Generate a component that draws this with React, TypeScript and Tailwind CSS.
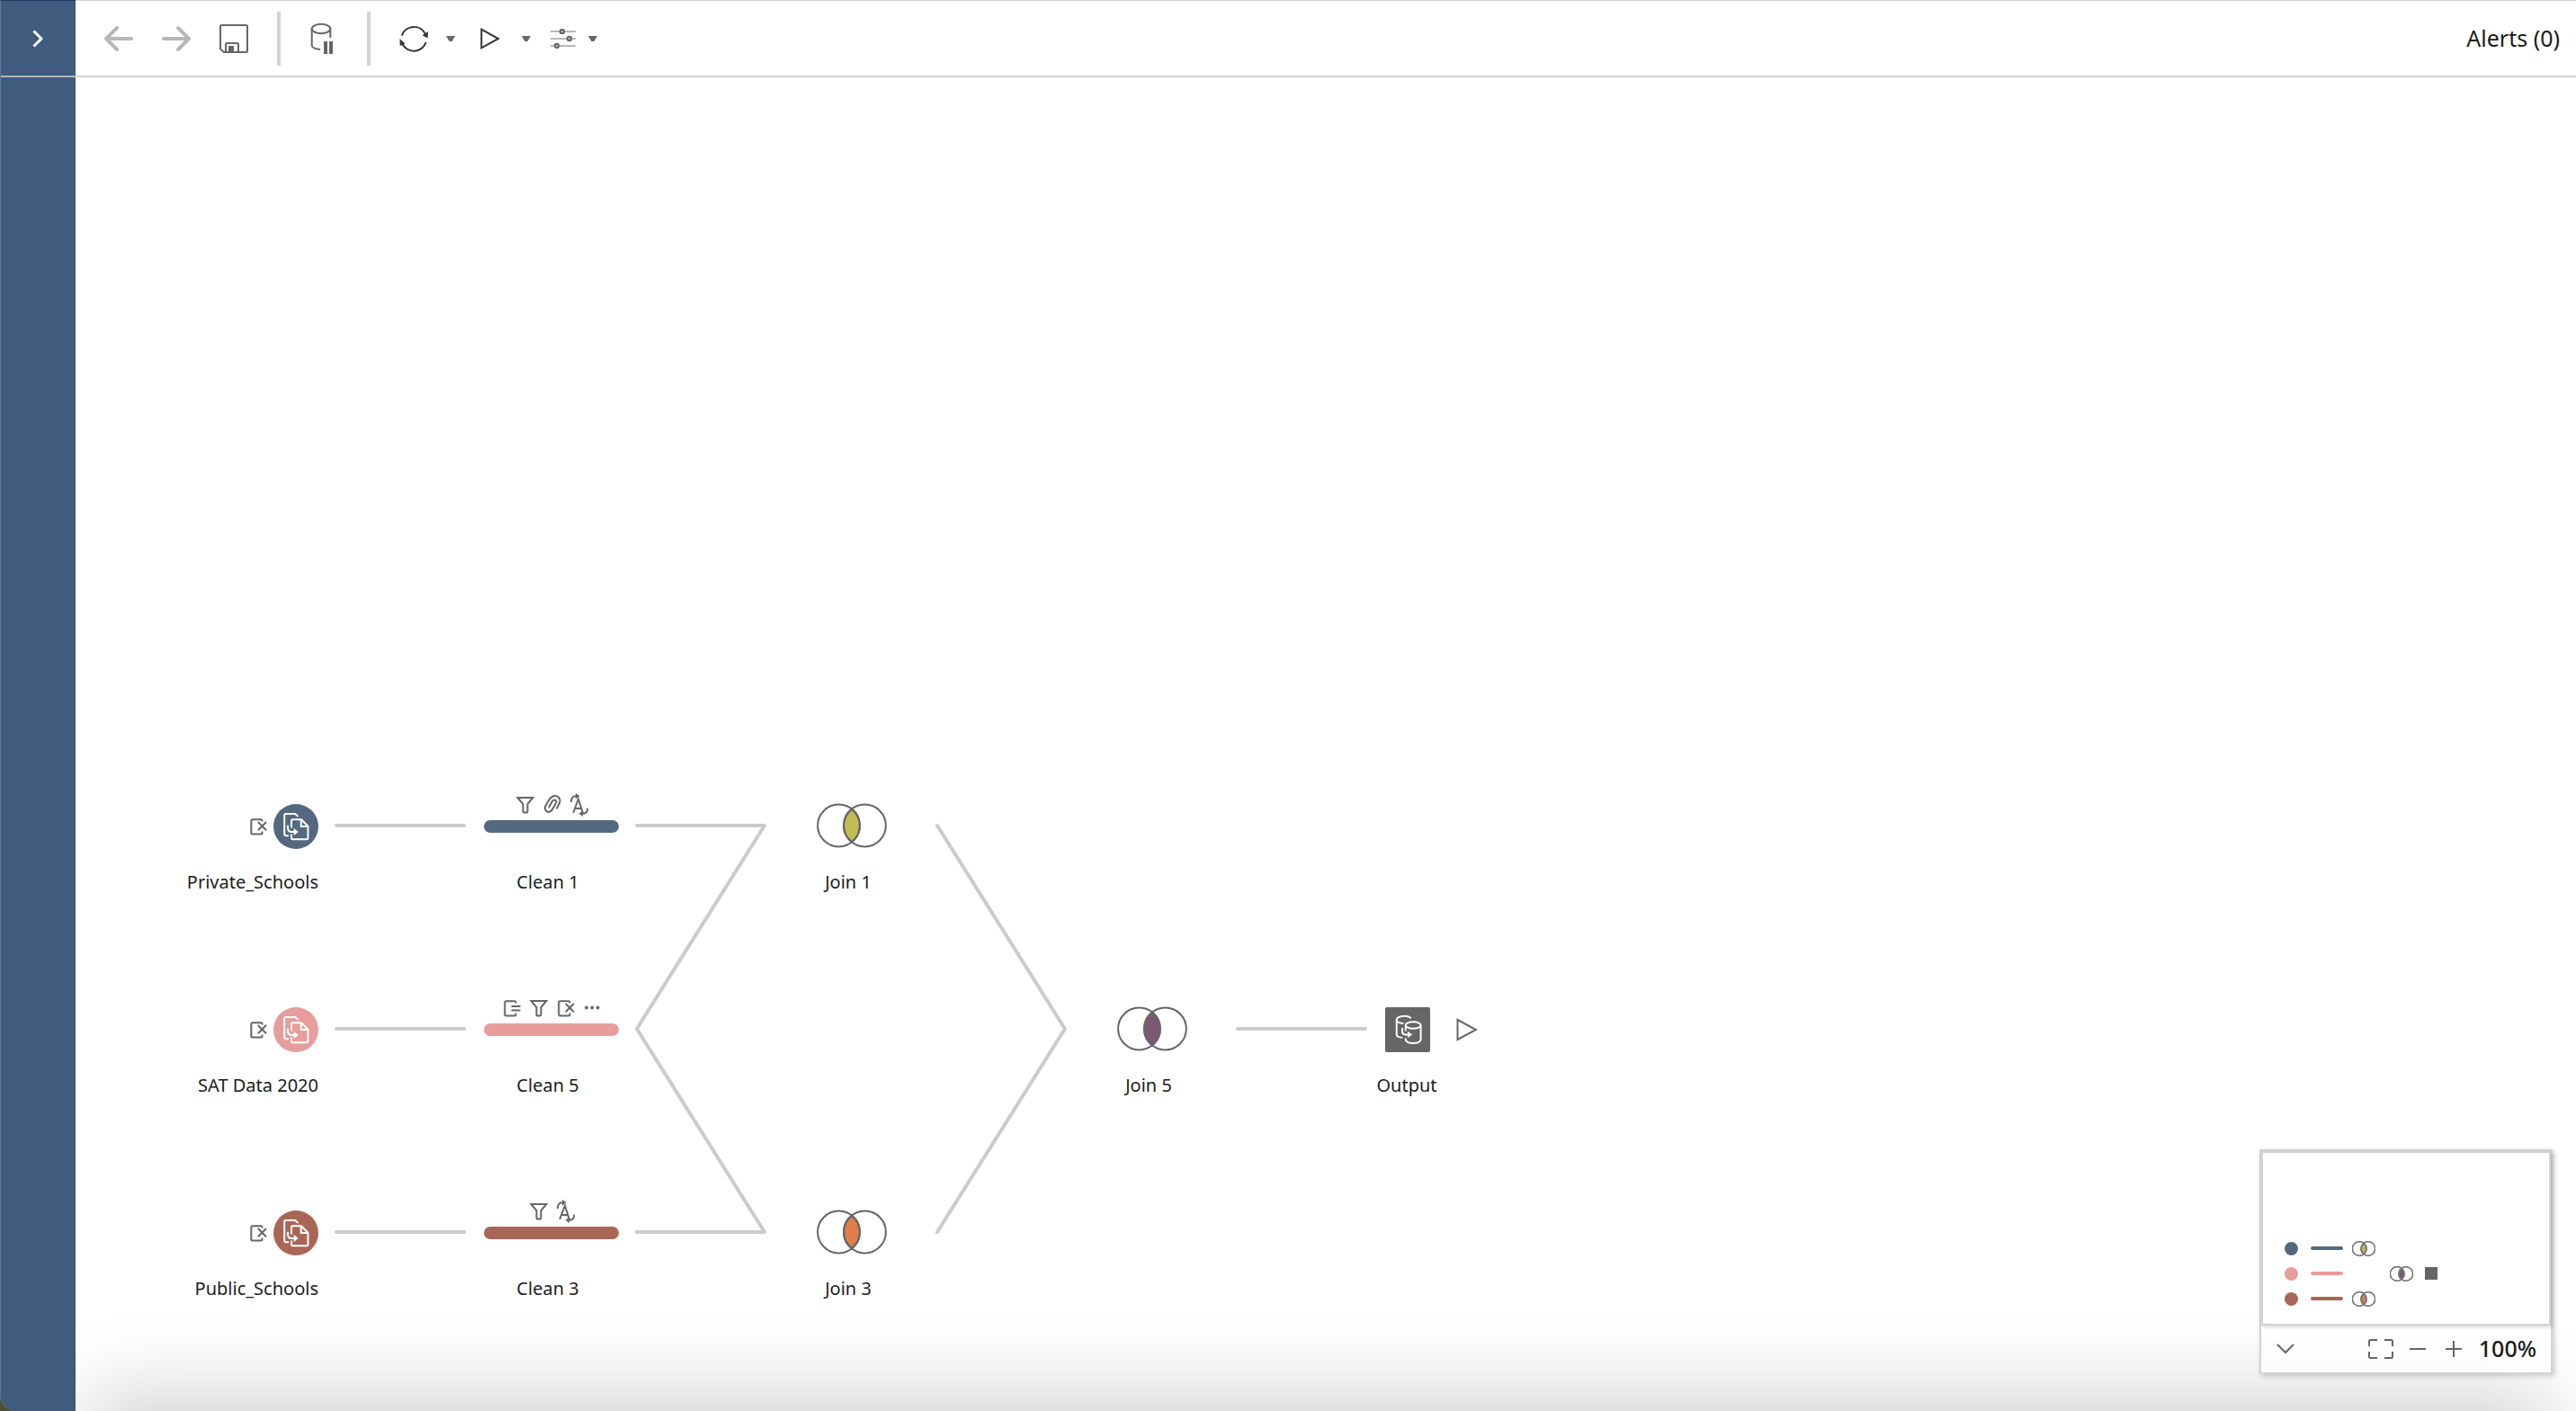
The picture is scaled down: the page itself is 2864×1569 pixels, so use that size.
import type { ReactNode } from "react";

type Badge = "filter" | "clip" | "rename" | "remove" | "list" | "more";

const ICON = "block fill-none stroke-[#666666] stroke-2";

function BadgeIcon({ kind }: { kind: Badge }) {
  return (
    <svg viewBox="0 0 20 26" className={`${ICON} h-[26px] w-5`} aria-hidden="true">
      {kind === "filter" && <path d="M1.5 5H18.5L12.5 12V20.5q0 1-1 1h-3q-1 0-1-1V12Z" />}
      {kind === "clip" && (
        <path d="M14.8 17.5L18 11C20 6 16 2 11.5 3.2C8.5 4 7 6 5.5 9L2.5 14C.5 18 4 22 7.5 20.5C9 20 10 18.5 11 16.5L14 11C15.5 8 12 6 10 9L6 16" />
      )}
      {kind === "rename" && (
        <>
          <path d="M3.3 22L9 6.5L14 22M5 17H12.5" />
          <path d="M1 10C1 5 3 3.3 6 3.3M19.3 16.5C19.3 21 17 22.7 14 22.7" />
          <path d="M6 0L10.5 3.2L6 6.4ZM14 19.6L9.5 22.8L14 26Z" className="fill-[#666666] stroke-none" />
        </>
      )}
      {(kind === "remove" || kind === "list") && (
        <path d="M14.5 7.5V7q0-1.8-1.5-1.8H4Q2.3 5.2 2.3 7V20q0 1.5 1.5 1.5H13q1.5 0 1.5-1.5V18.5" />
      )}
      {kind === "remove" && <path d="M9.8 8L19 17.3M19 8L9.8 17.3" />}
      {kind === "list" && <path d="M9.5 11H19.5M9.5 15.5H19.5" />}
      {kind === "more" && (
        <g className="fill-[#666666] stroke-none">
          <circle cx="3" cy="12.5" r="1.9" />
          <circle cx="9.3" cy="12.5" r="1.9" />
          <circle cx="15.6" cy="12.5" r="1.9" />
        </g>
      )}
    </svg>
  );
}

function FilesIcon() {
  return (
    <svg viewBox="0 0 30 32" className="block h-8 w-[30px] fill-none stroke-white stroke-2" aria-hidden="true">
      <path d="M16.5 5L13.3 2H2.7Q1.2 2 1.2 3.5V24.8q0 1.4 1.5 1.4H6" />
      <path d="M9 17.5V9.8q0-1.5 1.5-1.5H20L27.4 15.7V28.8q0 1.5-1.5 1.5H10.5Q9 30.3 9 28.8V24.5M19.7 8.3V15.9H27.4" />
      <path d="M5 14.8V17.5Q5 22 9.5 22H13" />
      <path d="M11.6 18L16.8 22L11.6 26Z" className="fill-white stroke-none" />
    </svg>
  );
}

function DatabaseOutIcon() {
  return (
    <svg viewBox="0 0 30 32" className="block h-8 w-[30px] fill-none stroke-white stroke-2" aria-hidden="true">
      <path d="M17.8 3.2C13-1 1.8 1 1.8 5.2V21.5Q2 24.5 8.3 24.8M1.8 5.2Q2 8.6 9.5 9" />
      <ellipse cx="20.2" cy="11" rx="8.4" ry="3.8" />
      <path d="M11.8 11V17.5M11.8 25.5V27Q12.5 31 20.2 31T28.6 27V11" />
      <path d="M8 14V18Q8 21.4 11.5 21.4H15.5" />
      <path d="M14 17.7L19.2 21.4L14 25.1Z" className="fill-white stroke-none" />
    </svg>
  );
}

function Venn({ fill, small }: { fill: string; small?: boolean }) {
  return (
    <svg
      viewBox="0 0 78 50"
      className={small ? "block h-[17px] w-[26px] fill-none stroke-[#777777] stroke-5" : "block h-[50px] w-[78px] fill-none stroke-[#666666] stroke-2"}
      aria-hidden="true"
    >
      <path d="M39 6.6A23.4 23.4 0 0 1 39 43.4A23.4 23.4 0 0 1 39 6.6Z" className={fill} />
      <circle cx="24.5" cy="25" r="23.4" />
      <circle cx="53.5" cy="25" r="23.4" />
    </svg>
  );
}

function Caret({ label }: { label: string }) {
  return (
    <button type="button" aria-label={label} className="block">
      <svg viewBox="0 0 10 6" className="block h-1.5 w-2.5 fill-[#666666]">
        <path d="M0 0H10L6.5 6H3.5Z" />
      </svg>
    </button>
  );
}

function Tool({ label, children }: { label: string; children: ReactNode }) {
  return (
    <button type="button" aria-label={label} className="block">
      {children}
    </button>
  );
}

function Toolbar() {
  return (
    <header className="flex h-[86px] shrink-0 items-center justify-between border-t border-b-2 border-t-[#d5d5d5] border-b-[#d3d3d3] bg-white pr-[18px] pl-8">
      <div className="flex items-center">
        <div className="flex items-center gap-8">
          <Tool label="Undo">
            <svg viewBox="0 0 32 32" className="block size-8 fill-none stroke-[#b8b8b8] stroke-4" strokeLinecap="round" strokeLinejoin="round">
              <path d="M14 4L2 16L14 28M2 16H30" />
            </svg>
          </Tool>
          <Tool label="Redo">
            <svg viewBox="0 0 32 32" className="block size-8 fill-none stroke-[#b8b8b8] stroke-4" strokeLinecap="round" strokeLinejoin="round">
              <path d="M18 4L30 16L18 28M30 16H2" />
            </svg>
          </Tool>
          <Tool label="Save">
            <svg viewBox="0 0 32 32" className="block size-8 fill-none stroke-[#666666] stroke-2">
              <path d="M2.5 1H29.5Q31 1 31 2.5V29.5Q31 31 29.5 31H5L1 27.5V2.5Q1 1 2.5 1Z" />
              <path d="M7 31V22.5Q7 21 8.5 21H19.5Q21 21 21 22.5V31" />
              <path d="M10 24H16V31H10Z" className="fill-[#666666] stroke-none" />
            </svg>
          </Tool>
          <div className="h-15 w-1 bg-[#d3d3d3]" />
          <Tool label="Pause data updates">
            <svg viewBox="0 0 32 36" className="block h-9 w-8 fill-none stroke-[#666666] stroke-2">
              <ellipse cx="13" cy="7" rx="10.3" ry="5.2" />
              <path d="M2.7 7V25.5Q3 29 12 30M23.3 7V17" />
              <path d="M16 21H20V35H16ZM22 21H26V35H22Z" className="fill-[#666666] stroke-none" />
            </svg>
          </Tool>
          <div className="h-15 w-1 bg-[#d3d3d3]" />
          <Tool label="Refresh">
            <svg viewBox="0 0 32 32" className="block size-8 fill-none stroke-[#333333] stroke-2">
              <path d="M2.6 12.6A14.2 14.2 0 0 1 29 11.2M29.6 20A14.2 14.2 0 0 1 3 21" />
              <path d="M25.5 12.2L32 8L31.5 15.5ZM.5 16L6.5 21.8L.7 24Z" className="fill-[#333333] stroke-none" />
            </svg>
          </Tool>
        </div>
        <div className="ml-5 flex items-center">
          <Caret label="Refresh options" />
        </div>
        <div className="ml-7 flex items-center gap-6">
          <Tool label="Run flow">
            <svg viewBox="0 0 22 24" className="block h-6 w-[22px] fill-none stroke-[#333333] stroke-2">
              <path d="M1.3 1.7L20 12L1.3 22.3Z" />
            </svg>
          </Tool>
          <Caret label="Run options" />
        </div>
        <div className="ml-[22px] flex items-center gap-3.5">
          <Tool label="Flow parameters">
            <svg viewBox="0 0 28 22" className="block h-[22px] w-7 fill-none stroke-[#b8b8b8] stroke-2">
              <path d="M0 3H28M0 11H28M0 19H28" />
              <g className="fill-[#b8b8b8] stroke-[#666666]">
                <circle cx="13" cy="3" r="2.2" />
                <circle cx="21" cy="11" r="2.2" />
                <circle cx="7" cy="19" r="2.2" />
              </g>
            </svg>
          </Tool>
          <Caret label="Parameter options" />
        </div>
      </div>
      <button type="button" className="text-[25px]">
        Alerts (0)
      </button>
    </header>
  );
}

const LABEL = "block text-xl leading-7 whitespace-nowrap";

function Source({ name, color, place }: { name: string; color: string; place: string }) {
  return (
    <div className={`absolute w-60 ${place}`}>
      <div className="flex items-center justify-end gap-[7px]">
        <BadgeIcon kind="remove" />
        <button type="button" aria-label={name} className={`flex size-[50px] items-center justify-center rounded-full pl-0.5 ${color}`}>
          <FilesIcon />
        </button>
      </div>
      <span className={`${LABEL} mt-[23px] text-right`}>{name}</span>
    </div>
  );
}

function Clean({ name, color, badges, place }: { name: string; color: string; badges: Badge[]; place: string }) {
  return (
    <div className={`absolute w-[150px] ${place}`}>
      <div className="flex justify-center gap-2.5 pl-0.5">
        {badges.map((b) => (
          <BadgeIcon key={b} kind={b} />
        ))}
      </div>
      <button type="button" aria-label={name} className={`mt-1 block h-3.5 w-full rounded-full ${color}`} />
      <span className={`${LABEL} mt-[41px] pr-2 text-center`}>{name}</span>
    </div>
  );
}

function Join({ name, fill, place }: { name: string; fill: string; place: string }) {
  return (
    <div className={`absolute w-[78px] ${place}`}>
      <button type="button" aria-label={name} className="block">
        <Venn fill={fill} />
      </button>
      <span className={`${LABEL} mt-6 pr-2 text-center`}>{name}</span>
    </div>
  );
}

function Flow() {
  return (
    <>
      <svg className="absolute top-0 left-0 h-[1400px] w-[1600px] fill-none stroke-[#cbcbcb] stroke-4" strokeLinecap="round" strokeLinejoin="round" aria-hidden="true">
        <path d="M290 832H432M290 1058H432M290 1284H432" />
        <path d="M624 832H766L624 1058L766 1284H624" />
        <path d="M958 832L1100 1058L958 1284" />
        <path d="M1292 1058H1434" />
      </svg>
      <Source name="Private_Schools" color="bg-[#54697f]" place="top-[808px] left-[30px]" />
      <Source name="SAT Data 2020" color="bg-[#e79d9c]" place="top-[1034px] left-[30px]" />
      <Source name="Public_Schools" color="bg-[#a96657]" place="top-[1260px] left-[30px]" />
      <Clean name="Clean 1" color="bg-[#54697f]" badges={["filter", "clip", "rename"]} place="top-[796px] left-[454px]" />
      <Clean name="Clean 5" color="bg-[#e79d9c]" badges={["list", "filter", "remove", "more"]} place="top-[1022px] left-[454px]" />
      <Clean name="Clean 3" color="bg-[#a96657]" badges={["filter", "rename"]} place="top-[1248px] left-[454px]" />
      <Join name="Join 1" fill="fill-[#c3bc52]" place="top-[807px] left-[824px]" />
      <Join name="Join 5" fill="fill-[#7d5877]" place="top-[1033px] left-[1158px]" />
      <Join name="Join 3" fill="fill-[#e07d48]" place="top-[1259px] left-[824px]" />
      <div className="absolute top-[1034px] left-[1456px]">
        <div className="flex items-center gap-[29px]">
          <button type="button" aria-label="Output" className="flex size-[50px] items-center justify-center rounded-xs bg-[#666666] pl-0.5">
            <DatabaseOutIcon />
          </button>
          <button type="button" aria-label="Run output" className="block">
            <svg viewBox="0 0 24 26" className="block h-[26px] w-6 fill-none stroke-[#666666] stroke-2">
              <path d="M1.5 2L22 13L1.5 24Z" />
            </svg>
          </button>
        </div>
        <span className={`${LABEL} mt-[23px] w-12 text-center`}>
          <span className="-mx-4">Output</span>
        </span>
      </div>
    </>
  );
}

const miniRows = [
  { dot: "bg-[#54697f]", join: "fill-[#c3bc52]" },
  { dot: "bg-[#e79d9c]", join: "" },
  { dot: "bg-[#a96657]", join: "fill-[#e07d48]" },
];

function MiniMap() {
  return (
    <section aria-label="Flow navigator" className="absolute right-[26px] bottom-[41px] w-[326px] border-2 border-[#d3d3d3] bg-white/70 shadow-[2px_2px_6px_rgba(0,0,0,0.2)]">
      <div className="flex h-[194px] flex-col justify-end gap-3 border-2 border-[#d3d3d3] bg-white pb-5 pl-6 shadow-[2px_2px_4px_rgba(0,0,0,0.15)]">
        {miniRows.map((r, i) => (
          <div key={r.dot} className="flex h-4 items-center">
            <span className={`size-[15px] rounded-full ${r.dot}`} />
            <span className={`ml-3.5 h-1 w-9 rounded-full ${r.dot}`} />
            {i === 1 ? (
              <>
                <span className="ml-[52px]">
                  <Venn small fill="fill-[#7d5877]" />
                </span>
                <span className="ml-[13px] size-3.5 bg-[#666666]" />
              </>
            ) : (
              <span className="ml-2.5">
                <Venn small fill={r.join} />
              </span>
            )}
          </div>
        ))}
      </div>
      <div className="flex h-[52px] items-center justify-between pr-4 pl-[17px]">
        <Tool label="Collapse navigator">
          <svg viewBox="0 0 20 12" className="block h-3 w-5 fill-none stroke-[#666666] stroke-2" strokeLinecap="round">
            <path d="M1.5 1.5L10 10L18.5 1.5" />
          </svg>
        </Tool>
        <div className="flex items-center">
          <Tool label="Fit to screen">
            <svg viewBox="0 0 28 22" className="block h-[22px] w-7 fill-none stroke-[#666666] stroke-2">
              <path d="M1 8V2.5Q1 1 2.5 1H10M18 1H25.5Q27 1 27 2.5V8M27 14V19.5Q27 21 25.5 21H18M10 21H2.5Q1 21 1 19.5V14" />
            </svg>
          </Tool>
          <div className="ml-[18px] flex gap-[22px]">
            <Tool label="Zoom out">
              <svg viewBox="0 0 18 18" className="block size-[18px] stroke-[#666666] stroke-2">
                <path d="M0 9H18" />
              </svg>
            </Tool>
            <Tool label="Zoom in">
              <svg viewBox="0 0 18 18" className="block size-[18px] stroke-[#666666] stroke-2">
                <path d="M0 9H18M9 0V18" />
              </svg>
            </Tool>
          </div>
          <button type="button" className="ml-[19px] text-[25px] font-medium">
            100%
          </button>
        </div>
      </div>
    </section>
  );
}

export default function App() {
  return (
    <div className="flex h-screen overflow-hidden bg-[#4b5238] font-['Noto_Sans',sans-serif] text-[#1b1b1b]">
      <aside className="w-21 shrink-0 overflow-hidden rounded-bl-[18px] border-t border-l border-t-[#1f3c63] border-l-[#5f7a8f] bg-[#3f5b7d]">
        <button type="button" aria-label="Expand connections" className="flex h-[85px] w-full items-center justify-center border-b-2 border-[#b5b5b5] pr-0.5">
          <svg viewBox="0 0 12 20" className="block h-5 w-3 fill-none stroke-white stroke-3" strokeLinejoin="round">
            <path d="M1.5 1.5L10 10L1.5 18.5" />
          </svg>
        </button>
      </aside>
      <div className="flex min-w-0 flex-1 flex-col bg-white">
        <Toolbar />
        <main className="relative flex-1 overflow-hidden">
          <div className="absolute right-12 -bottom-20 left-8 h-20 shadow-[0_0_90px_20px_rgba(0,0,0,0.18)]" aria-hidden="true" />
          <Flow />
          <MiniMap />
        </main>
      </div>
    </div>
  );
}
